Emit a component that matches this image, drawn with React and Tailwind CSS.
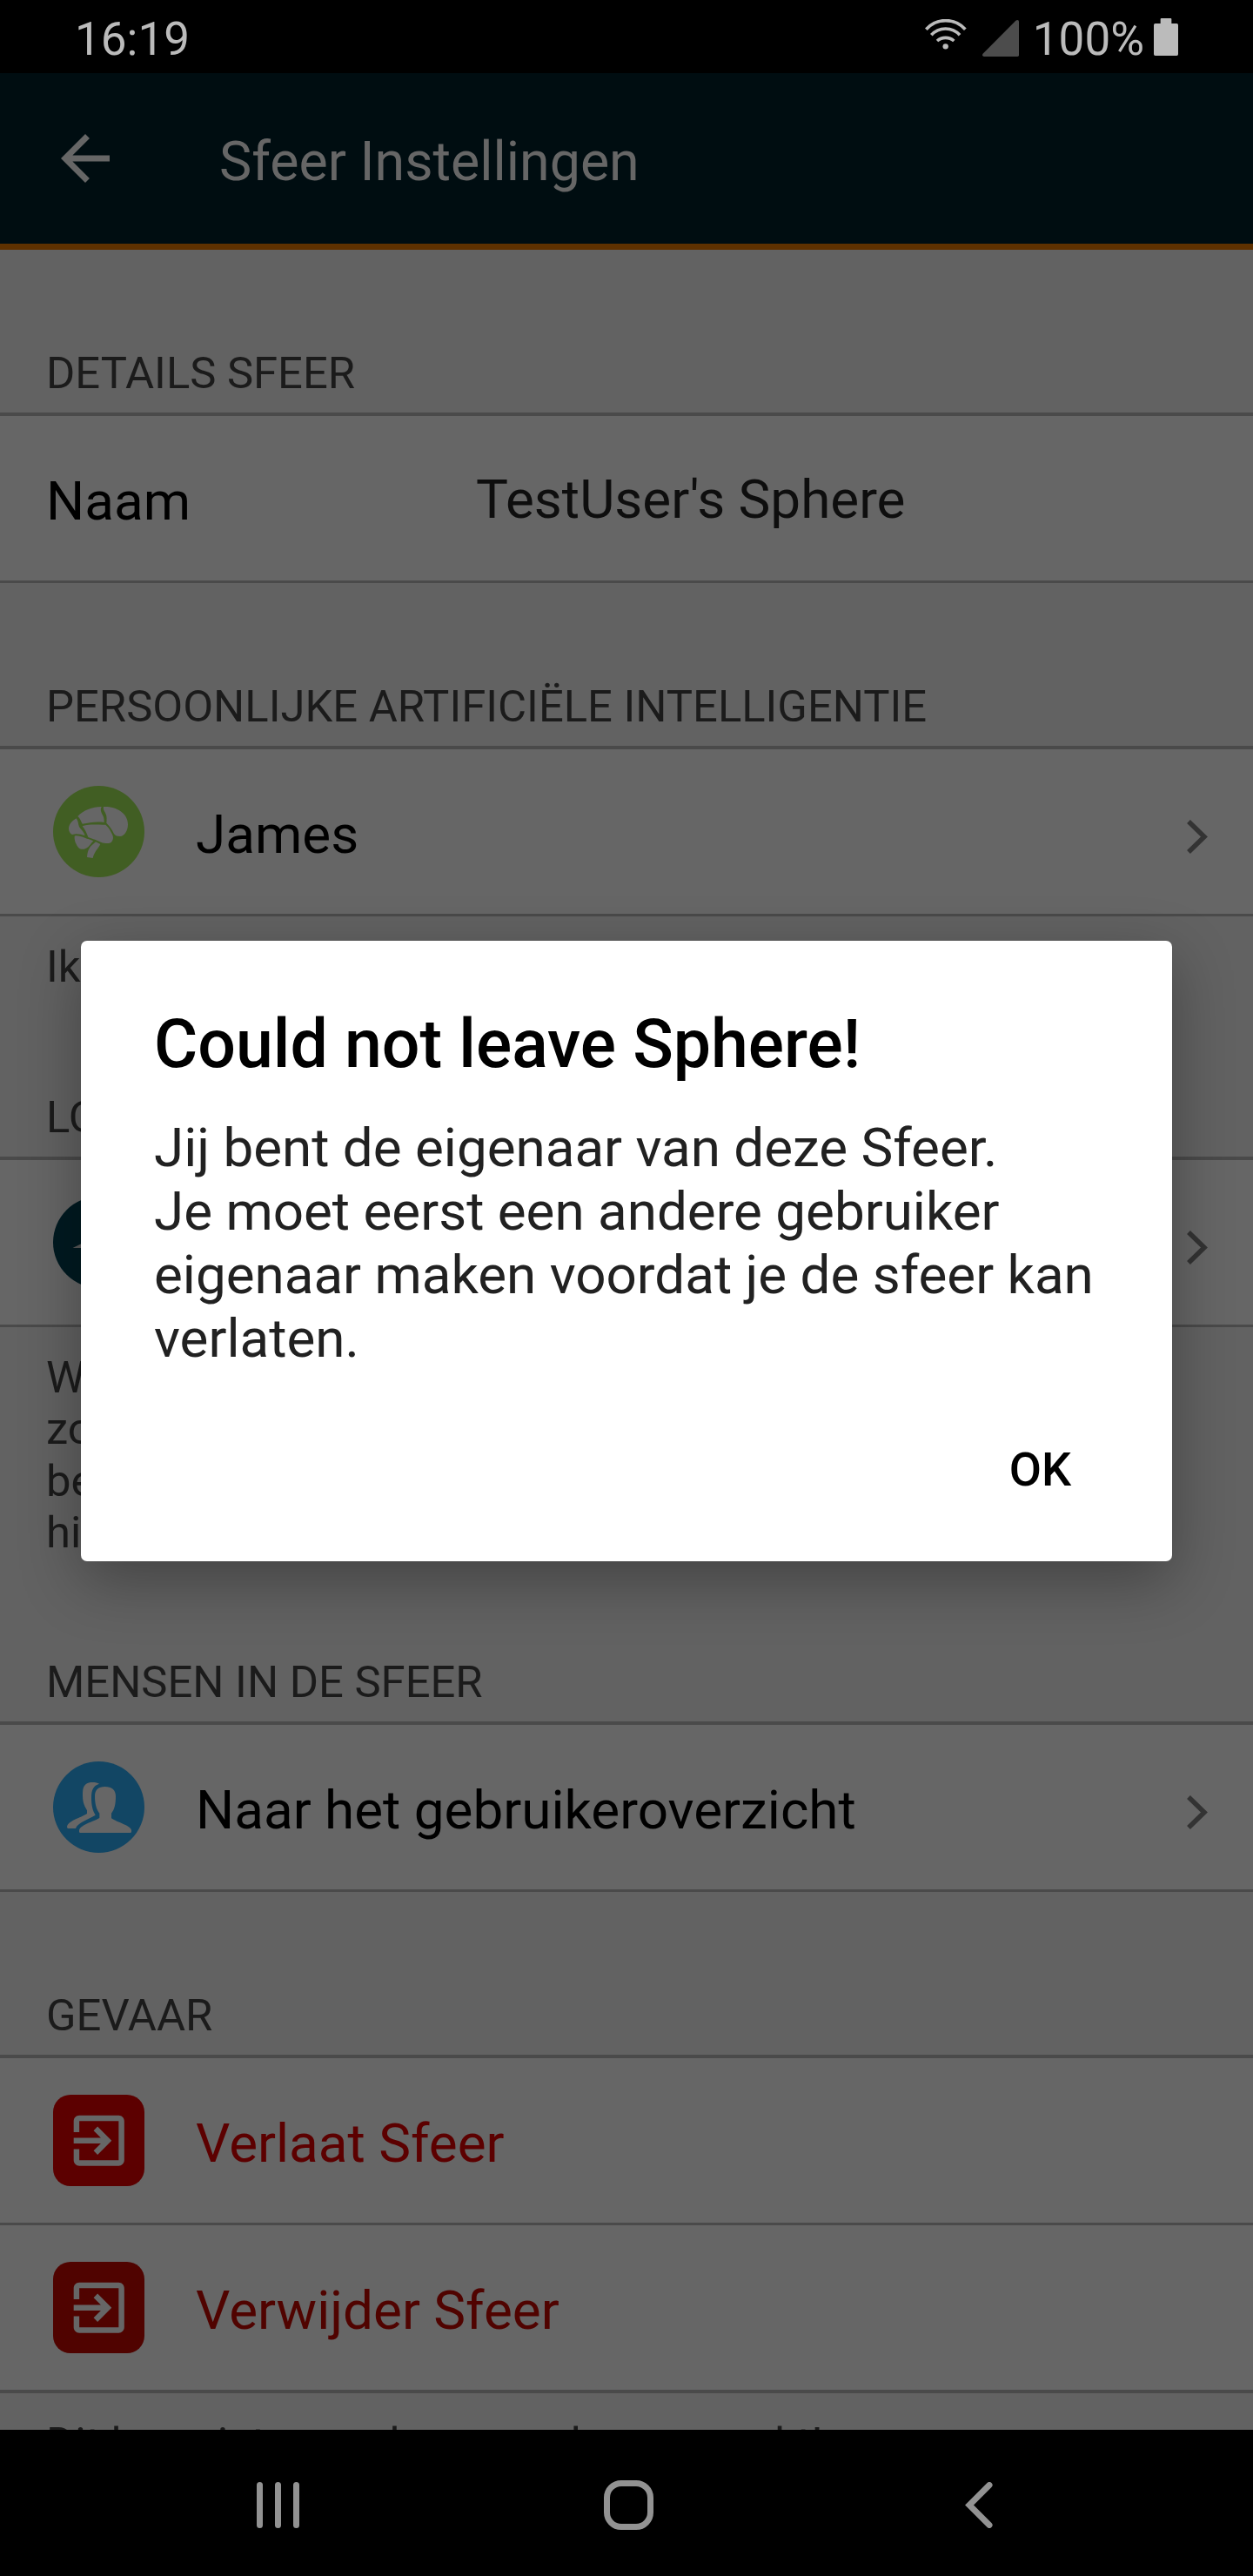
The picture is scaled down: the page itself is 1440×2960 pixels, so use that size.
import React from 'react';

function Wifi() {
  return (
    <svg width="48" height="35" viewBox="68 64 144 105" fill="none" stroke="#bbbbbb" strokeWidth="11">
      <path d="M72 99A90.7 90.7 0 0 1 207 99M90 119A65.6 65.6 0 0 1 188 119M110 139A43.7 43.7 0 0 1 168 139" />
      <circle cx="139" cy="158" r="9.5" fill="#bbbbbb" stroke="none" />
    </svg>
  );
}

function Signal() {
  return (
    <svg width="42" height="42" viewBox="0 0 126 126" fill="#4c4c4c">
      <path d="M115 2Q118 0 121 0Q126 0 126 5V121Q126 126 121 126H5Q-2 124 1 117Z" />
    </svg>
  );
}

function Battery() {
  return (
    <svg width="28" height="43" viewBox="0 0 84 129" fill="#bbbbbb">
      <path d="M23 3Q23 0 26 0H58Q61 0 61 3V18H79Q84 18 84 23V124Q84 129 79 129H5Q0 129 0 124V23Q0 18 5 18H23Z" />
    </svg>
  );
}

function StatusBar() {
  return (
    <div className="flex h-[84px] items-center justify-between bg-black px-[86px] text-[53px] text-[#bbbbbb]">
      <span className="pt-[5px] leading-[60px]">16:19</span>
      <div className="flex items-center">
        <div className="mb-[6px] mr-[18px]"><Wifi /></div>
        <div className="mr-[16px] mt-[4px]"><Signal /></div>
        <span className="mr-[11px] pt-[5px] leading-[60px]">100%</span>
        <div className="mt-[1px]"><Battery /></div>
      </div>
    </div>
  );
}

function TitleBar() {
  return (
    <div className="flex h-[203px] items-center border-b-[7px] border-[#5e3100] bg-[#000d11] pl-[56px]">
      <svg width="84" height="84" viewBox="0 0 24 24" fill="#666666">
        <path d="M20 11H7.83l5.59-5.59L12 4l-8 8 8 8 1.41-1.41L7.83 13H20v-2z" />
      </svg>
      <h1 className="ml-[112px] pt-[8px] text-[62.700px] leading-[74px] text-[#666666]">Sfeer Instellingen</h1>
    </div>
  );
}

function SectionTitle({ children, className = 'h-[187px]' }) {
  return (
    <div className={`flex items-end pb-[16px] pl-[53px] text-[50.750px] leading-[59px] text-[#1b1b1b] ${className}`}>
      {children}
    </div>
  );
}

function Divider({ thick }) {
  return <div className={thick ? 'h-[4px] bg-[#4a4a4a]' : 'h-[3px] bg-[#4a4a4a]'} />;
}

function Chevron() {
  return (
    <svg className="ml-auto mt-[12px]" width="24" height="39" viewBox="0 0 24 39" fill="none" stroke="#333333" strokeWidth="5.5">
      <path d="M2 2L20 19.5L2 37" />
    </svg>
  );
}

function Row({ icon, label, color = 'text-black', chevron }) {
  return (
    <div className="flex h-[189px] items-center bg-[#666666] pl-[61px] pr-[52px]">
      {icon}
      <span className={`ml-[59px] pt-[5px] text-[62px] leading-[73px] ${color}`}>{label}</span>
      {chevron && <Chevron />}
    </div>
  );
}

function BrainIcon() {
  return (
    <svg width="105" height="105" viewBox="0 0 315 315" fill="#666666">
      <circle cx="157.5" cy="157.5" r="157.5" fill="#415e23" />
      <path d="M85 105C103 85 135 72 167 72C161 84 167 92 172 103C176 111 176 118 176 126C150 122 125 127 101 131C95 122 94 112 85 105Z" />
      <path d="M174 72C215 70 258 92 258 133C258 155 246 174 231 174C210 174 211 166 204 154C198 143 190 134 184 128C185 117 186 104 181 95C177 86 172 82 174 72Z" />
      <path d="M80 112C65 121 54 134 54 147C54 157 60 167 67 168C81 163 96 168 110 171C104 154 95 150 90 141C86 131 87 120 80 112Z" />
      <path d="M101 139C127 131 155 135 181 134C191 143 196 151 200 160C205 168 207 174 207 180C205 194 198 199 184 198C167 199 154 188 139 184L121 177C115 161 111 152 101 139Z" />
      <path d="M74 173C82 170 96 174 106 178C118 184 129 185 139 190C129 200 123 213 111 217C95 222 85 214 80 201C76 194 73 184 74 173Z" />
      <path d="M147 193L163 201C155 217 143 226 137 249L117 246C119 223 124 215 132 206C137 201 142 198 147 193Z" />
    </svg>
  );
}

function NavigateIcon() {
  return (
    <svg width="105" height="105" viewBox="0 0 105 105" fill="#5a5a5a">
      <circle cx="52.5" cy="52.5" r="52.5" fill="#001a21" />
      <path d="M22.500 59L82 30L53 89V59Z" />
    </svg>
  );
}

function PeopleIcon() {
  return (
    <svg width="105" height="105" viewBox="183 402 315 315" fill="#666666">
      <circle cx="340.500" cy="559.500" r="157.500" fill="#124664" />
      <path d="M362 489C339 489 327 500 327 522C327 548 332 567 343 581V596C338 604 273 620 273 640V644Q273 648 277 648H449Q453 648 453 644V639C453 623 391 607 384 597V581C395 567 399 550 399 522C399 500 385 489 362 489Z" />
      <path d="M342 479C334 473 310 472 300 478C287 486 285 496 285 520C285 548 294 560 300 571V581C292 591 231 606 231 628Q231 633 235 633H261C268 612 305 602 329 587C319 570 315 552 315 527C315 499 323 485 342 479Z" />
    </svg>
  );
}

function ExitIcon({ className }) {
  return (
    <div className={`flex size-[105px] items-center justify-center rounded-[20px] ${className}`}>
      <svg width="77.500" height="77.500" viewBox="0 0 24 24" fill="#666666">
        <path d="M10.090 15.590L11.500 17l5-5-5-5-1.410 1.410L12.670 11H3v2h9.670l-2.580 2.590zM19 3H5c-1.110 0-2 .9-2 2v4h2V5h14v14H5v-4H3v4c0 1.100.890 2 2 2h14c1.100 0 2-.9 2-2V5c0-1.100-.9-2-2-2z" />
      </svg>
    </div>
  );
}

function Note({ children, className }) {
  return (
    <div className={`overflow-hidden pl-[53px] pt-[28px] text-[50.750px] leading-[59.300px] text-[#1b1b1b] ${className}`}>
      {children}
    </div>
  );
}

function NavBar() {
  return (
    <div className="flex h-[168px] items-center bg-black pl-[295px] pt-[4px]">
      <div className="flex gap-[14px]">
        <div className="h-[53px] w-[7px] rounded-full bg-[#929292]" />
        <div className="h-[53px] w-[7px] rounded-full bg-[#929292]" />
        <div className="h-[53px] w-[7px] rounded-full bg-[#929292]" />
      </div>
      <div className="ml-[350px] size-[57px] rounded-[20px] border-[7px] border-[#929292]" />
      <svg className="ml-[358px]" width="32" height="53" viewBox="0 0 32 53" fill="none" stroke="#929292" strokeWidth="7" strokeLinecap="round">
        <path d="M28 3.500L5 26.500L28 49.500" />
      </svg>
    </div>
  );
}

function AlertDialog() {
  return (
    <div className="absolute left-[93px] top-[1081px] flex h-[713px] w-[1254px] flex-col rounded-[7px] bg-white px-[84px] pt-[74px] shadow-[0_22px_70px_rgba(0,0,0,0.32)]">
      <h2 className="text-[77px] font-medium leading-[90px] text-black">Could not leave Sphere!</h2>
      <p className="mt-[38px] whitespace-nowrap text-[61.950px] leading-[73px] text-[#212121]">
        Jij bent de eigenaar van deze Sfeer.<br />
        Je moet eerst een andere gebruiker<br />
        eigenaar maken voordat je de sfeer kan<br />
        verlaten.
      </p>
      <button className="ml-auto mr-[32px] mt-[82px] text-[54px] font-medium leading-[64px] text-black">OK</button>
    </div>
  );
}

export default function App() {
  return (
    <div className="relative flex h-[2960px] w-[1440px] flex-col overflow-hidden bg-[#626262] font-['Roboto',sans-serif]">
      <StatusBar />
      <TitleBar />
      <div className="h-[2505px] overflow-hidden">
        <SectionTitle>DETAILS SFEER</SectionTitle>
        <Divider thick />
        <div className="flex h-[189px] items-center bg-[#666666] pl-[53px] text-[62px] leading-[73px]">
          <span className="w-[494px] pt-[5px] text-black">Naam</span>
          <span className="pt-[1px] text-[#0e0e0e]">TestUser's Sphere</span>
        </div>
        <Divider />
        <SectionTitle>PERSOONLIJKE ARTIFICIËLE INTELLIGENTIE</SectionTitle>
        <Divider thick />
        <Row icon={<BrainIcon />} label="James" chevron />
        <Divider />
        <Note className="h-[130px]">Ik</Note>
        <SectionTitle className="h-[146px]">LO</SectionTitle>
        <Divider thick />
        <Row icon={<NavigateIcon />} label="" chevron />
        <Divider />
        <Note className="h-[290px]">
          W<br />zo<br />be<br />hi
        </Note>
        <SectionTitle className="h-[163px]">MENSEN IN DE SFEER</SectionTitle>
        <Divider thick />
        <Row icon={<PeopleIcon />} label="Naar het gebruikeroverzicht" chevron />
        <Divider />
        <SectionTitle>GEVAAR</SectionTitle>
        <Divider thick />
        <Row icon={<ExitIcon className="bg-[#5c0000]" />} label="Verlaat Sfeer" color="text-[#5c0000]" />
        <Divider />
        <Row icon={<ExitIcon className="bg-[#500300]" />} label="Verwijder Sfeer" color="text-[#500300]" />
        <Divider thick />
        <Note className="h-[90px]">Dit kan niet ongedaan worden gemaakt!</Note>
      </div>
      <NavBar />
      <AlertDialog />
    </div>
  );
}
